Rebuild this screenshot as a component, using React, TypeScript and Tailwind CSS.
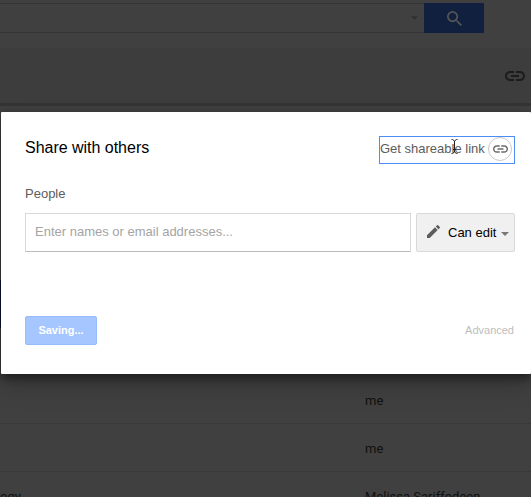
import React from "react";

function LinkIcon({ className }: { className: string }) {
  return (
    <svg viewBox="2 7 20 10" className={className} fill="currentColor" aria-hidden="true">
      <path d="M3.9 12c0-1.71 1.39-3.1 3.1-3.1h4V7H7c-2.76 0-5 2.24-5 5s2.24 5 5 5h4v-1.9H7c-1.71 0-3.1-1.39-3.1-3.1zM8 13h8v-2H8v2zm9-6h-4v1.9h4c1.71 0 3.1 1.39 3.1 3.1s-1.39 3.1-3.1 3.1h-4V17h4c2.76 0 5-2.24 5-5s-2.24-5-5-5z" />
    </svg>
  );
}

function Caret({ className }: { className: string }) {
  return (
    <svg viewBox="0 0 8 4" className={className} fill="currentColor" aria-hidden="true">
      <path d="M0 0h8L4 4z" />
    </svg>
  );
}

function FileRow({ name = "", owner }: { name?: string; owner: string }) {
  return (
    <div className="flex h-12 shrink-0 items-center border-b border-[#3a3a3a] pt-0.5 text-[13px] text-[#111]">
      <div className="w-[365px] shrink-0">{name}</div>
      <div className="whitespace-nowrap">{owner}</div>
    </div>
  );
}

function Backdrop() {
  return (
    <div className="flex h-full flex-col font-['Roboto',sans-serif]">
      <header className="flex h-12 shrink-0 items-start pt-[3px]">
        <div className="flex h-[30px] w-[424px] items-center justify-end border-y border-[#353535] pr-1.5">
          <Caret className="h-1 w-[7px] text-[#303030]" />
        </div>
        <button className="flex h-[30px] w-[60px] items-center justify-center rounded-r-[1px] bg-[#12203f]">
          <svg viewBox="3 3 17.5 17.5" className="h-[15px] w-[15px] text-[#555]" fill="currentColor" aria-hidden="true">
            <path d="M15.5 14h-.79l-.28-.27A6.47 6.47 0 0 0 16 9.5 6.5 6.5 0 1 0 9.5 16c1.61 0 3.09-.59 4.23-1.57l.27.28v.79l5 4.99L20.49 19l-4.99-5zm-6 0C7.01 14 5 11.99 5 9.5S7.01 5 9.5 5 14 7.01 14 9.5 11.99 14 9.5 14z" />
          </svg>
        </button>
      </header>
      <div className="flex h-[58px] shrink-0 items-center justify-end border-b-[3px] border-[#343434] bg-[#3d3d3d] pr-1.5">
        <LinkIcon className="h-2.5 w-5 text-[#1c1c1c]" />
      </div>
      <div className="flex h-[270px] shrink-0 flex-col justify-end pb-12">
        <div className="h-12 bg-[#0b1736]" />
      </div>
      <FileRow owner="me" />
      <FileRow owner="me" />
      <FileRow name="ogy" owner="Melissa Sariffodeen" />
    </div>
  );
}

function ShareDialog() {
  return (
    <section className="absolute top-[112px] right-0 left-px h-[262px] rounded-[1px] bg-white px-6 shadow-[0_12px_24px_rgba(0,0,0,0.2),0_4px_10px_rgba(0,0,0,0.45)]">
      <div className="flex justify-between pt-6">
        <h1 className="pt-px text-base leading-[22px] tracking-[-0.02px] text-black">Share with others</h1>
        <div className="relative -mr-2 flex h-7 w-[136px] items-center justify-between border border-[#4d8df6] pr-0.5 text-[13px] text-[#5c5c5c]">
          <span className="-mt-0.5 whitespace-nowrap">Get shareable link</span>
          <span className="-mt-0.5 flex size-6 shrink-0 items-center justify-center rounded-full border border-[#c9c9c9] text-[#6c6c6c]">
            <LinkIcon className="h-2 w-[15px]" />
          </span>
          <svg viewBox="0 0 7 15" className="absolute top-[2px] left-[71px] h-[15px] w-[7px]" fill="none" stroke="#222" aria-hidden="true">
            <path d="M.5.5h1l2 1.5 2-1.5h1M3.5 2v11M.5 14.5h1l2-1.5 2 1.5h1M2 10.5h3" />
          </svg>
        </div>
      </div>
      <div className="mt-5 h-[17px] text-[13px] leading-[20px] text-[#5c5c5c]">People</div>
      <div className="mt-3 -mr-2 flex gap-[5px]">
        <div className="flex h-[39px] w-[386px] items-center border border-[#d9d9d9] border-b-[#bcbcbc] pb-0.5 pl-[9px] text-[13px] text-[#a4a4a4]">
          Enter names or email addresses...
        </div>
        <button className="flex h-[39px] w-[99px] items-center rounded-[2px] border border-[#d9d9d9] bg-[#f0f0f0] pl-2.5 text-[13px] text-black">
          <svg viewBox="3 3 18 18" className="-mt-0.5 h-[13px] w-[13px] text-[#5c5c5c]" fill="currentColor" aria-hidden="true">
            <path d="M3 17.25V21h3.75L17.81 9.94l-3.75-3.75L3 17.25zM20.71 7.04a1 1 0 0 0 0-1.41l-2.34-2.34a1 1 0 0 0-1.41 0l-1.83 1.83 3.75 3.75 1.83-1.83z" />
          </svg>
          <span className="ml-2 whitespace-nowrap">Can edit</span>
          <Caret className="mt-0.5 ml-[5px] h-1 w-2 text-[#777]" />
        </button>
      </div>
      <div className="mt-16 -mr-2 flex items-center justify-between text-[11px]">
        <button className="h-[29px] w-[72px] rounded-[2px] border border-[#97bbfb] bg-[#a6c6ff] font-bold text-white">Saving...</button>
        <span className="mr-px text-[#bdbdbd]">Advanced</span>
      </div>
    </section>
  );
}

export default function App() {
  return (
    <main className="relative h-[497px] w-[531px] overflow-hidden bg-[#404040] font-['Liberation_Sans',Arial,sans-serif]">
      <Backdrop />
      <ShareDialog />
    </main>
  );
}
